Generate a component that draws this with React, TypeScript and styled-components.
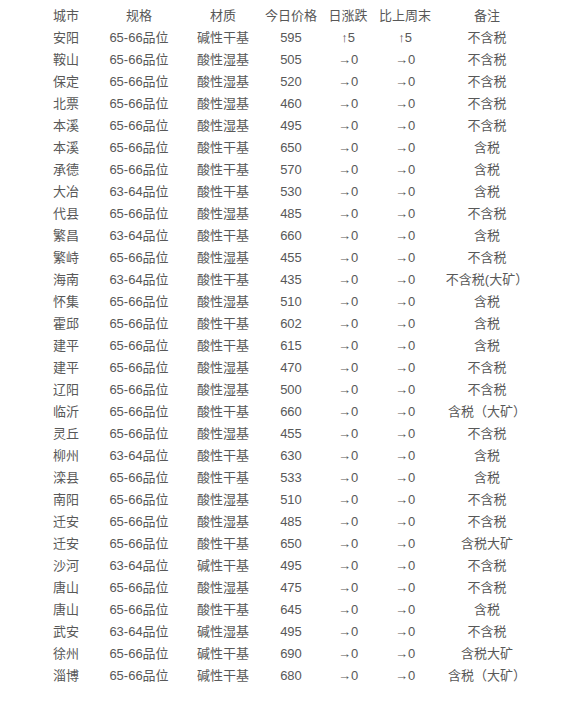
import styled, { createGlobalStyle } from 'styled-components';

const GlobalStyle = createGlobalStyle`
  html, body {
    margin: 0;
    padding: 0;
    background: #ffffff;
  }
`;

type Row = [string, string, string, string, string, string, string];

const UP = '↑5';
const FLAT = '→0';

const rows: Row[] = [
  ['安阳', '65-66品位', '碱性干基', '595', UP, UP, '不含税'],
  ['鞍山', '65-66品位', '酸性湿基', '505', FLAT, FLAT, '不含税'],
  ['保定', '65-66品位', '酸性湿基', '520', FLAT, FLAT, '不含税'],
  ['北票', '65-66品位', '酸性湿基', '460', FLAT, FLAT, '不含税'],
  ['本溪', '65-66品位', '酸性湿基', '495', FLAT, FLAT, '不含税'],
  ['本溪', '65-66品位', '酸性干基', '650', FLAT, FLAT, '含税'],
  ['承德', '65-66品位', '酸性干基', '570', FLAT, FLAT, '含税'],
  ['大冶', '63-64品位', '酸性干基', '530', FLAT, FLAT, '含税'],
  ['代县', '65-66品位', '酸性湿基', '485', FLAT, FLAT, '不含税'],
  ['繁昌', '63-64品位', '酸性干基', '660', FLAT, FLAT, '含税'],
  ['繁峙', '65-66品位', '酸性湿基', '455', FLAT, FLAT, '不含税'],
  ['海南', '63-64品位', '酸性干基', '435', FLAT, FLAT, '不含税(大矿）'],
  ['怀集', '65-66品位', '酸性湿基', '510', FLAT, FLAT, '含税'],
  ['霍邱', '65-66品位', '酸性干基', '602', FLAT, FLAT, '含税'],
  ['建平', '65-66品位', '酸性干基', '615', FLAT, FLAT, '含税'],
  ['建平', '65-66品位', '酸性湿基', '470', FLAT, FLAT, '不含税'],
  ['辽阳', '65-66品位', '酸性湿基', '500', FLAT, FLAT, '不含税'],
  ['临沂', '65-66品位', '酸性干基', '660', FLAT, FLAT, '含税（大矿）'],
  ['灵丘', '65-66品位', '酸性湿基', '455', FLAT, FLAT, '不含税'],
  ['柳州', '63-64品位', '酸性干基', '630', FLAT, FLAT, '含税'],
  ['滦县', '65-66品位', '酸性干基', '533', FLAT, FLAT, '含税'],
  ['南阳', '65-66品位', '酸性湿基', '510', FLAT, FLAT, '不含税'],
  ['迁安', '65-66品位', '酸性湿基', '485', FLAT, FLAT, '不含税'],
  ['迁安', '65-66品位', '酸性干基', '650', FLAT, FLAT, '含税大矿'],
  ['沙河', '63-64品位', '碱性干基', '495', FLAT, FLAT, '不含税'],
  ['唐山', '65-66品位', '酸性湿基', '475', FLAT, FLAT, '不含税'],
  ['唐山', '65-66品位', '酸性干基', '645', FLAT, FLAT, '含税'],
  ['武安', '63-64品位', '碱性湿基', '495', FLAT, FLAT, '不含税'],
  ['徐州', '65-66品位', '碱性干基', '690', FLAT, FLAT, '含税大矿'],
  ['淄博', '65-66品位', '碱性干基', '680', FLAT, FLAT, '含税（大矿）'],
];

const headers = ['城市', '规格', '材质', '今日价格', '日涨跌', '比上周末', '备注'];
const widths = [52, 94, 74, 62, 52, 62, 102];

const App = () => {
  return (
    <Page>
      <GlobalStyle />
      <Table>
        <colgroup>
          {widths.map((w, i) => (
            <col key={i} style={{ width: w }} />
          ))}
        </colgroup>
        <thead>
          <tr>
            {headers.map((h) => (
              <HeadCell key={h}>{h}</HeadCell>
            ))}
          </tr>
        </thead>
        <tbody>
          {rows.map((r, i) => (
            <tr key={i}>
              {r.map((v, j) => (
                <Cell key={j}>{v}</Cell>
              ))}
            </tr>
          ))}
        </tbody>
      </Table>
    </Page>
  );
};

const Page = styled.div`
  padding: 5px 0 0 40px;
  font-family: 'Liberation Sans', 'Noto Sans CJK SC', sans-serif;
  font-size: 13px;
  color: #585858;
`;

const Table = styled.table`
  border-collapse: collapse;
  table-layout: fixed;
  width: 498px;
`;

const HeadCell = styled.th`
  height: 22px;
  padding: 0;
  font-weight: normal;
  text-align: center;
  white-space: nowrap;
  line-height: 22px;
`;

const Cell = styled.td`
  height: 22px;
  padding: 0;
  text-align: center;
  white-space: nowrap;
  line-height: 22px;
`;

export default App;
